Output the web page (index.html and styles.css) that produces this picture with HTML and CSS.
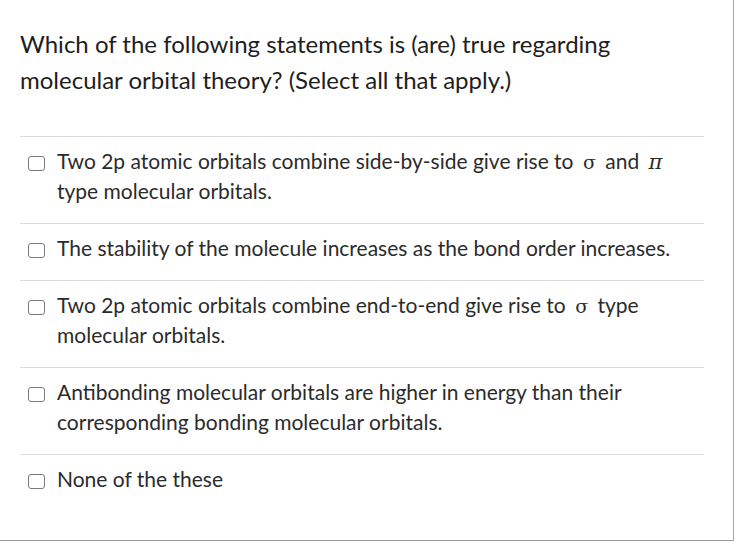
FILE: index.html
```html
<!DOCTYPE html>
<html>
<head>
<meta charset="utf-8">
<link rel="stylesheet" href="styles.css">
</head>
<body>
<div class="frame">
  <p class="question">Which of the following statements is (are) true regarding molecular orbital theory? (Select all that apply.)</p>
  <div class="options">
    <div class="option"><span class="box"></span><span class="text">Two 2p atomic orbitals combine side-by-side give rise to <span class="math">σ</span> and <span class="math pi">π</span> type molecular orbitals.</span></div>
    <div class="option"><span class="box"></span><span class="text">The stability of the molecule increases as the bond order increases.</span></div>
    <div class="option"><span class="box"></span><span class="text">Two 2p atomic orbitals combine end-to-end give rise to <span class="math">σ</span> type molecular orbitals.</span></div>
    <div class="option"><span class="box"></span><span class="text">Antibonding molecular orbitals are higher in energy than their corresponding bonding molecular orbitals.</span></div>
    <div class="option"><span class="box"></span><span class="text">None of the these</span></div>
  </div>
</div>
</body>
</html>
```
FILE: styles.css
```css
html, body {
  margin: 0;
  padding: 0;
  background: #fff;
}
.frame {
  width: 713px;
  height: 514px;
  padding: 26px 0 0 20px;
  border-right: 1px solid #a3a3a3;
  border-bottom: 1px solid #9a9a9a;
  font-family: Lato, "Noto Sans", sans-serif;
  color: #1e1e1e;
}
.question {
  margin: 0;
  font-size: 24px;
  line-height: 36px;
  width: 630px;
}
.options {
  margin-top: 38px;
  width: 684px;
}
.option {
  display: flex;
  align-items: flex-start;
  gap: 12px;
  border-top: 1px solid #dcdcdc;
  padding: 9px 14px 17px 8px;
  font-size: 21px;
  line-height: 30px;
  color: #2b2b2b;
}
.box {
  flex: none;
  width: 15px;
  height: 13px;
  margin-top: 10px;
  border: 1.5px solid #7a7a7a;
  border-radius: 3px;
  background: #fff;
}
.text {
  flex: 1;
}
.math {
  font-family: "DejaVu Serif", "Liberation Serif", serif;
  font-size: 19px;
  line-height: 1;
  margin: 0 4px;
}
.pi {
  font-size: 21px;
  font-style: italic;
  margin-right: 0;
}
```
